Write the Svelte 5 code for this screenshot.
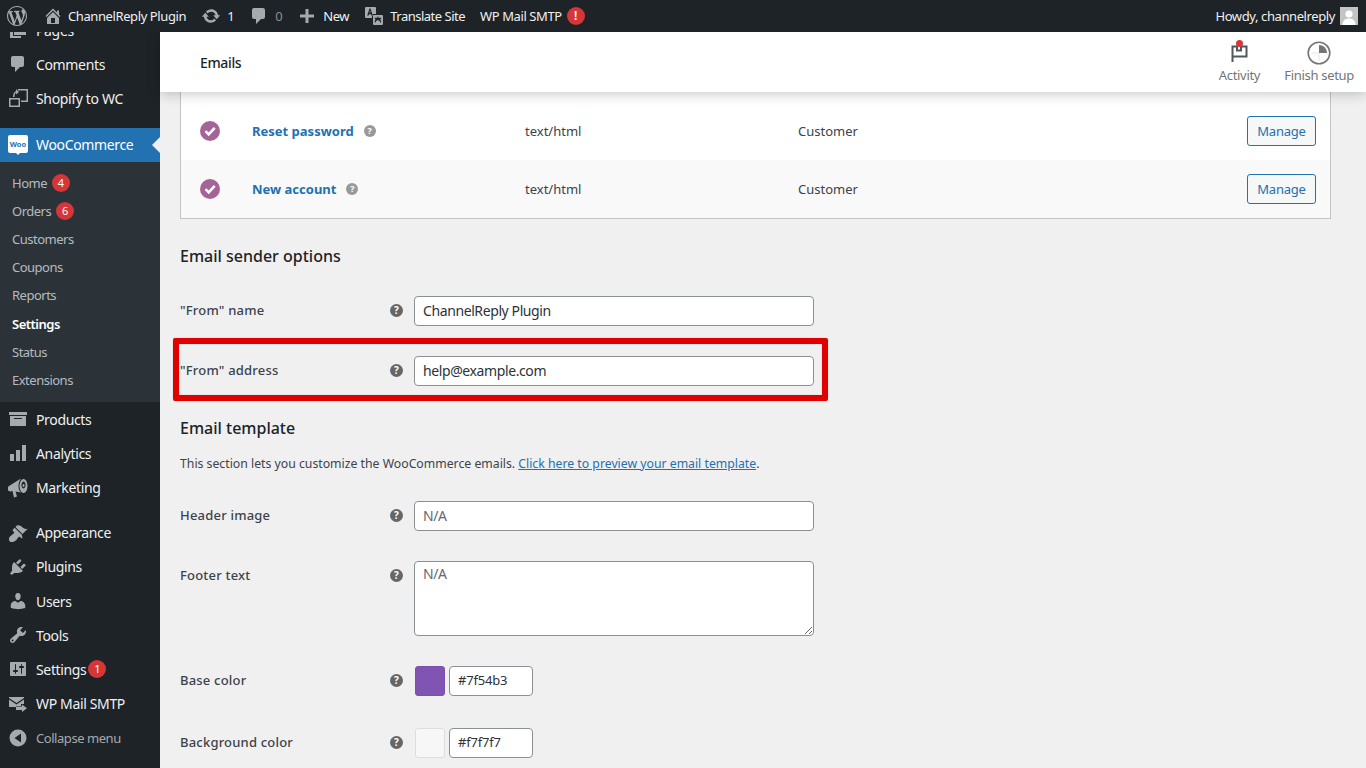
<script>
	const paths = {
		wp: 'M20 10c0-5.51-4.49-10-10-10C4.48 0 0 4.49 0 10c0 5.52 4.48 10 10 10 5.51 0 10-4.48 10-10zM7.78 15.37L4.37 6.22c.55-.02 1.17-.08 1.17-.08.5-.06.44-1.13-.06-1.11 0 0-1.45.11-2.37.11-.18 0-.37 0-.58-.01C4.12 2.69 6.87 1.11 10 1.11c2.33 0 4.45.87 6.05 2.34-.68-.11-1.65.39-1.65 1.58 0 .74.45 1.36.9 2.1.35.61.55 1.36.55 2.46 0 1.49-1.4 5-1.4 5l-3.03-8.37c.54-.02.82-.17.82-.17.5-.05.44-1.25-.06-1.22 0 0-1.44.12-2.38.12-.87 0-2.33-.12-2.33-.12-.5-.03-.56 1.2-.06 1.22l.92.08 1.26 3.41zM17.41 10c.24-.64.74-1.87.43-4.25.7 1.29 1.05 2.71 1.05 4.25 0 3.29-1.73 6.24-4.4 7.78.97-2.59 1.94-5.2 2.92-7.78zM6.1 18.09C3.12 16.65 1.11 13.53 1.11 10c0-1.3.23-2.48.72-3.59C3.25 10.3 4.67 14.2 6.1 18.09zm4.03-6.63l2.58 6.98c-.86.29-1.76.45-2.71.45-.79 0-1.57-.11-2.29-.33.81-2.38 1.62-4.74 2.42-7.1z',
		home: 'M16 8.5l1.53 1.53-1.06 1.06L10 4.62l-6.47 6.47-1.06-1.06L10 2.5l4 4v-2h2v4zm-6-2.46l6 5.99V18H4v-5.97zM12 17v-5H8v5h4z',
		comments: 'M5 2h9c1.1 0 2 .9 2 2v7c0 1.1-.9 2-2 2h-2l-5 5v-5H5c-1.1 0-2-.9-2-2V4c0-1.1.9-2 2-2z',
		update: 'M10.2 3.28c3.53 0 6.43 2.61 6.92 6h2.08l-3.5 4-3.5-4h2.32c-.45-1.97-2.21-3.44-4.32-3.44-1.45 0-2.73.71-3.54 1.78L4.95 5.66C6.23 4.2 8.11 3.28 10.2 3.28zm-.4 13.44c-3.52 0-6.43-2.61-6.92-6H.8l3.5-4c1.17 1.33 2.33 2.67 3.5 4H5.48c.45 1.97 2.21 3.44 4.32 3.44 1.45 0 2.73-.71 3.54-1.78l1.71 1.95c-1.28 1.46-3.15 2.39-5.25 2.39z',
		plus: 'M17 8.5v3h-5.5V17h-3v-5.500H3v-3h5.500V3h3v5.500z',
		translate: 'M2 1h9a1 1 0 0 1 1 1v6H9a1 1 0 0 0-1 1v3H2a1 1 0 0 1-1-1V2a1 1 0 0 1 1-1zm3.500 1.500L3.200 9.500h1.400l.4-1.300h2l.4 1.300h1.400L6.500 2.500zm.5 2l.6 2H5.400zM10 9h8a1 1 0 0 1 1 1v8a1 1 0 0 1-1 1h-8a1 1 0 0 1-1-1v-8a1 1 0 0 1 1-1zm3.400 1.500v1.200h-2.900v1h1l-1 3.600 1 .3.700-1.600 1.700-1 1.700 1 .7 1.600 1-.3-1-3.600h1v-1h-2.900v-1.200z',
		pages: 'M6 15V2h12v13H6zm-1 1h8v2H2V5h3v11z',
		shopify: 'M10 1h10v13h-7v-1.500h5.500V2.500H10zM1 10h11v9H1zm1.500 1.500v6h8v-6zM5 9c0-3 1-5 3-6V1l3 3-3 2.500V4.500c-1 1-1.500 2.500-1.500 4.500z',
		woo: 'M2 0h16a2 2 0 0 1 2 2v14a2 2 0 0 1-2 2h-6l-2 2-2-2H2a2 2 0 0 1-2-2V2a2 2 0 0 1 2-2z',
		products: 'M1 3h18v3H1zM2 7h16v10H2zm4 2v1h8V9z',
		analytics: 'M2 11h4v7H2zM8 7h4v11H8zM14 2h4v16h-4z',
		marketing: 'M1 8L13 .5c-1.500 2-2.500 4.500-2.500 7.500s1 5.500 2.500 6.500L7.500 13.500l1.500 5-3 1L4.500 13 2 13.500a3 3 0 0 1-1-5.500zM15.500 1a4 7 0 1 0 .01 0zm0 2.500a2 3.500 0 1 1-.01 0zm0 2.500a1 1.500 0 1 0 .01 0z',
		appearance: 'M14.48 11.06L7.41 3.99l1.5-1.5c.5-.56 2.3-.47 3.51.32 1.21.8 1.43 1.28 2.91 2.1 1.18.64 2.45 1.26 4.45.85zm-.71.71L6.7 4.7 4.93 6.47c-.39.39-.39 1.02 0 1.41l1.06 1.06c.39.39.39 1.03 0 1.42-.6.6-1.43 1.11-2.21 1.69-.35.26-.7.53-1.01.84C1.43 13.23.91 15.17.91 16.4c0 1.42 1.16 2.65 2.65 2.65 1.23 0 3.17-.52 4.52-1.87.31-.31.58-.66.84-1.01.58-.78 1.09-1.61 1.69-2.21.39-.39 1.03-.39 1.42 0l1.06 1.06c.39.39 1.02.39 1.41 0z',
		plugins: 'M13.11 4.36L9.87 7.6 8 5.73l3.24-3.24c.35-.34 1.05-.2 1.56.32.52.51.66 1.21.31 1.55zm-8 1.77l.91-1.12 9.01 9.01-1.19.84c-.71.71-2.63 1.16-3.82 1.16H6.14L4.9 17.26c-.59.59-1.54.59-2.12 0-.59-.58-.59-1.53 0-2.12l1.24-1.24v-3.88c0-1.13.4-3.19 1.09-3.89zm7.26 3.97l3.24-3.24c.34-.35 1.04-.21 1.55.31.52.51.66 1.21.31 1.55l-3.24 3.25z',
		users: 'M10 9.25c-2.27 0-2.73-3.44-2.73-3.44C7 4.02 7.82 2 9.97 2c2.16 0 2.98 2.02 2.71 3.81 0 0-.41 3.44-2.68 3.44zm0 2.57L12.72 10c2.39 0 4.52 2.33 4.52 4.53v2.49s-3.65 1.13-7.24 1.13c-3.65 0-7.24-1.13-7.24-1.13v-2.49c0-2.25 1.94-4.48 4.47-4.48z',
		tools: 'M16.68 9.77c-1.34 1.34-3.3 1.67-4.95.99l-5.41 6.52c-.99.99-2.59.99-3.58 0s-.99-2.59 0-3.57l6.52-5.42c-.68-1.65-.35-3.61.99-4.95 1.28-1.28 3.12-1.62 4.72-1.06l-2.89 2.89 2.82 2.82 2.86-2.87c.53 1.58.18 3.39-1.08 4.65zM3.81 16.21c.4.39 1.04.39 1.43 0 .4-.4.4-1.04 0-1.43-.39-.4-1.03-.4-1.43 0-.39.39-.39 1.03 0 1.43z',
		settings: 'M18 16V4c0-.55-.45-1-1-1H3c-.55 0-1 .45-1 1v12c0 .55.45 1 1 1h14c.55 0 1-.45 1-1zM8 11h1c.55 0 1 .45 1 1s-.45 1-1 1H8v1.500c0 .28-.22.5-.5.5s-.5-.22-.5-.5V13H6c-.55 0-1-.45-1-1s.45-1 1-1h1V5.500c0-.28.22-.5.5-.5s.5.22.5.5V11zm5-2h-1c-.55 0-1-.45-1-1s.45-1 1-1h1V5.500c0-.28.22-.5.5-.5s.5.22.5.5V7h1c.55 0 1 .45 1 1s-.45 1-1 1h-1v5.500c0 .28-.22.5-.5.5s-.5-.22-.5-.5V9z',
		smtp: 'M1 3h15v1L8.500 9 1 4zm0 2.500l7.500 5 7.500-5V10h-3v3H1zM14 10.500l5 3.800-5 3.700V16H8v-3.500h6z',
		collapse: 'M10 1.500a8.500 8.500 0 1 1 0 17 8.500 8.500 0 0 1 0-17zM13 5.500L6.500 10l6.500 4.500z'
	};

	const topMenu = [
		{ label: 'Pages', icon: 'pages' },
		{ label: 'Comments', icon: 'comments' },
		{ label: 'Shopify to WC', icon: 'shopify' }
	];
	const subMenu = [
		{ label: 'Home', count: 4 },
		{ label: 'Orders', count: 6 },
		{ label: 'Customers' },
		{ label: 'Coupons' },
		{ label: 'Reports' },
		{ label: 'Settings', current: true },
		{ label: 'Status' },
		{ label: 'Extensions' }
	];
	const wooMenu = [
		{ label: 'Products', icon: 'products' },
		{ label: 'Analytics', icon: 'analytics' },
		{ label: 'Marketing', icon: 'marketing' }
	];
	const siteMenu = [
		{ label: 'Appearance', icon: 'appearance' },
		{ label: 'Plugins', icon: 'plugins' },
		{ label: 'Users', icon: 'users' },
		{ label: 'Tools', icon: 'tools' },
		{ label: 'Settings', icon: 'settings', count: 1 },
		{ label: 'WP Mail SMTP', icon: 'smtp' }
	];
	const emails = [
		{ name: 'Reset password' },
		{ name: 'New account', alt: true }
	];
</script>

{#snippet icon(name, size, cls = '')}
	<svg class={cls} width={size} height={size} viewBox="0 0 20 20" fill="currentColor" fill-rule="evenodd"><path d={paths[name]} /></svg>
{/snippet}

{#snippet help(cls = '')}
	<span class="help {cls}">?</span>
{/snippet}

{#snippet menuRow(item)}
	<li class="menu-item">
		<span class="menu-icon">{@render icon(item.icon, 20)}</span>
		<span>{item.label}</span>
		{#if item.count}<span class="count">{item.count}</span>{/if}
	</li>
{/snippet}

<div class="page">
	<header class="adminbar">
		<div class="bar-left">
			<span class="bar-item wp">{@render icon('wp', 20)}</span>
			<span class="bar-item site">{@render icon('home', 20)}<span class="txt">ChannelReply Plugin</span></span>
			<span class="bar-item updates">{@render icon('update', 20)}<span class="txt">1</span></span>
			<span class="bar-item comments">{@render icon('comments', 20)}<span class="txt dim">0</span></span>
			<span class="bar-item new">{@render icon('plus', 20)}<span class="txt">New</span></span>
			<span class="bar-item translate">{@render icon('translate', 20)}<span class="txt">Translate Site</span></span>
			<span class="bar-item smtp"><span class="txt">WP Mail SMTP</span><span class="alert">!</span></span>
		</div>
		<div class="bar-right">
			<span class="txt">Howdy, channelreply</span>
			<span class="avatar">
				<svg width="18" height="18" viewBox="0 0 18 18"><rect width="18" height="18" fill="#c4c4c4" /><circle cx="9" cy="7" r="3.600" fill="#fff" /><path d="M2.500 18c0-4.500 3-6.500 6.500-6.500s6.500 2 6.500 6.500z" fill="#fff" /></svg>
			</span>
		</div>
	</header>

	<div class="body">
		<nav class="sidebar">
			<ul class="menu first">
				{#each topMenu as item}
					{@render menuRow(item)}
				{/each}
			</ul>

			<div class="woo-head">
				<span class="menu-icon woo-icon">
					<svg width="20" height="20" viewBox="0 0 20 20"><path d={paths.woo} fill="#fff" /><text x="10" y="11.500" text-anchor="middle" class="woo-word">Woo</text></svg>
				</span>
				<span>WooCommerce</span>
			</div>
			<ul class="submenu">
				{#each subMenu as item}
					<li class:current={item.current}>
						<span>{item.label}</span>
						{#if item.count}<span class="count">{item.count}</span>{/if}
					</li>
				{/each}
			</ul>

			<ul class="menu woo-group">
				{#each wooMenu as item}
					{@render menuRow(item)}
				{/each}
			</ul>
			<ul class="menu site-group">
				{#each siteMenu as item}
					{@render menuRow(item)}
				{/each}
				<li class="menu-item collapse">
					<span class="menu-icon">{@render icon('collapse', 20)}</span>
					<span>Collapse menu</span>
				</li>
			</ul>
		</nav>

		<main class="main">
			<div class="wc-header">
				<h1>Emails</h1>
				<div class="wc-actions">
					<div class="wc-action">
						<span class="activity-icon">
							<svg width="24" height="24" viewBox="0 0 24 24" fill="none" stroke="#50575e" stroke-width="2"><path d="M5.500 21V5.500h4.500v4h4v-4h5.500v10H5.500" /></svg>
							<span class="dot"></span>
						</span>
						<span>Activity</span>
					</div>
					<div class="wc-action">
						<svg width="24" height="24" viewBox="0 0 24 24"><circle cx="12" cy="12" r="10.800" fill="#fff" stroke="#757575" stroke-width="1.600" /><path d="M12 4a8 8 0 0 1 8 8h-8z" fill="#757575" /><path d="M12 12v8M4 12h8" stroke="#e4e4e4" stroke-width="1" /></svg>
						<span>Finish setup</span>
					</div>
				</div>
			</div>

			<div class="content">
				<div class="email-table">
					{#each emails as row}
						<div class="email-row" class:alt={row.alt}>
							<span class="check">
								<svg width="20" height="20" viewBox="0 0 20 20"><circle cx="10" cy="10" r="10" fill="#a46497" /><path d="M5.500 10.200l3.200 3.200 6-6.600" fill="none" stroke="#fff" stroke-width="2.600" /></svg>
							</span>
							<span class="email-name"><a href="#top">{row.name}</a>{@render help('light')}</span>
							<span class="email-type">text/html</span>
							<span class="email-to">Customer</span>
							<span class="email-action"><button>Manage</button></span>
						</div>
					{/each}
				</div>

				<h2 class="sender-title">Email sender options</h2>
				<div class="field from-name">
					<label for="from-name">"From" name</label>
					{@render help()}
					<input id="from-name" value="ChannelReply Plugin" />
				</div>
				<div class="field from-address">
					<label for="from-address">"From" address</label>
					{@render help()}
					<input id="from-address" value="help@example.com" />
					<span class="highlight"></span>
				</div>

				<h2 class="template-title">Email template</h2>
				<p class="intro">This section lets you customize the WooCommerce emails. <a href="#top">Click here to preview your email template</a>.</p>

				<div class="field header-image">
					<label for="header-image">Header image</label>
					{@render help()}
					<input id="header-image" placeholder="N/A" />
				</div>
				<div class="field footer-text">
					<label for="footer-text">Footer text</label>
					{@render help()}
					<textarea id="footer-text" placeholder="N/A"></textarea>
				</div>
				<div class="field base-color">
					<label for="base-color">Base color</label>
					{@render help()}
					<span class="swatch purple"></span>
					<input id="base-color" class="color" value="#7f54b3" />
				</div>
				<div class="field bg-color">
					<label for="bg-color">Background color</label>
					{@render help()}
					<span class="swatch pale"></span>
					<input id="bg-color" class="color" value="#f7f7f7" />
				</div>
			</div>
		</main>
	</div>
</div>

<style>
	:global(body) {
		margin: 0;
		background: #f0f0f1;
	}

	.page {
		height: 768px;
		display: flex;
		flex-direction: column;
		overflow: hidden;
		background: #f0f0f1;
		font-family: "Noto Sans", "Open Sans", sans-serif;
		font-size: 13px;
		color: #3c434a;
	}

	.adminbar {
		height: 32px;
		flex: none;
		display: flex;
		justify-content: space-between;
		align-items: center;
		background: #1d2327;
		color: #f0f0f1;
		position: relative;
		z-index: 3;
	}

	.bar-left,
	.bar-item,
	.bar-right {
		display: flex;
		align-items: center;
	}

	.bar-item svg {
		color: #a7aaad;
		flex: none;
	}

	.bar-item {
		margin-left: 15px;
		gap: 6px;
	}

	.wp { margin-left: 7px; }
	.site { margin-left: 16px; gap: 5px; }
	.smtp { gap: 5px; }

	.txt {
		white-space: nowrap;
		letter-spacing: -0.4px;
	}

	.translate .txt {
		letter-spacing: -0.5px;
	}

	.dim {
		color: #8c8f94;
	}

	.alert {
		width: 18px;
		height: 18px;
		border-radius: 50%;
		background: #d63638;
		color: #fff;
		font-size: 12px;
		font-weight: 600;
		line-height: 18px;
		text-align: center;
	}

	.bar-right {
		gap: 5px;
		padding-right: 8px;
	}

	.avatar {
		display: block;
		width: 18px;
		height: 18px;
	}

	.avatar svg {
		display: block;
	}

	.body {
		flex: 1;
		display: flex;
		min-height: 0;
	}

	.sidebar {
		width: 160px;
		flex: none;
		background: #1d2327;
		color: #f0f0f1;
		overflow: hidden;
		font-size: 14px;
		letter-spacing: -0.35px;
	}

	ul {
		list-style: none;
		margin: 0;
		padding: 0;
	}

	.menu.first {
		margin-top: -19px;
		margin-bottom: 12px;
	}

	.menu-item {
		height: 34.2px;
		display: flex;
		align-items: center;
		white-space: nowrap;
	}

	.menu-icon {
		width: 36px;
		flex: none;
		display: flex;
		justify-content: center;
		color: #a7aaad;
	}

	.menu-item .count {
		margin-left: 2px;
	}

	.count {
		display: inline-block;
		width: 18px;
		height: 18px;
		border-radius: 50%;
		background: #d63638;
		color: #fff;
		font-size: 11px;
		line-height: 18px;
		text-align: center;
		letter-spacing: 0;
	}

	.woo-head {
		height: 34px;
		display: flex;
		align-items: center;
		background: #2271b1;
		color: #fff;
		position: relative;
	}

	.woo-head::after {
		content: "";
		position: absolute;
		right: 0;
		top: 9px;
		border: 8px solid transparent;
		border-right-color: #f0f0f1;
		border-left-width: 0;
	}

	.woo-word {
		font-size: 7.500px;
		font-weight: 700;
		fill: #2271b1;
		letter-spacing: 0;
	}

	.submenu {
		background: #2c3338;
		padding: 7px 0 8px;
		font-size: 13px;
		color: rgba(240, 246, 252, 0.7);
		letter-spacing: -0.5px;
	}

	.submenu li {
		height: 28.2px;
		padding-left: 12px;
		display: flex;
		align-items: center;
		gap: 5px;
	}

	.submenu .current {
		color: #fff;
		font-weight: 600;
	}

	.site-group {
		margin-top: 11px;
	}

	.collapse {
		color: #a7aaad;
		font-size: 13px;
		letter-spacing: -0.45px;
	}

	.main {
		flex: 1;
		min-width: 0;
		display: flex;
		flex-direction: column;
		position: relative;
	}

	.wc-header {
		height: 60px;
		flex: none;
		background: #fff;
		box-shadow: 0 2px 12px rgba(0, 0, 0, 0.22);
		display: flex;
		justify-content: space-between;
		align-items: center;
		position: relative;
		z-index: 2;
	}

	h1 {
		margin: 0 0 0 40px;
		font-size: 14px;
		font-weight: 500;
		color: #1e1e1e;
		letter-spacing: -0.35px;
	}

	.wc-actions {
		display: flex;
		height: 100%;
		align-items: center;
		gap: 24px;
		padding-right: 12px;
		color: #757575;
		letter-spacing: -0.3px;
	}

	.wc-action {
		display: flex;
		flex-direction: column;
		align-items: center;
		gap: 1px;
	}

	.activity-icon {
		position: relative;
		display: block;
		height: 24px;
	}

	.dot {
		position: absolute;
		top: -1px;
		left: 9px;
		width: 7px;
		height: 7px;
		border-radius: 50%;
		background: #d63638;
	}

	.content {
		flex: 1;
		min-height: 0;
		overflow: hidden;
		padding: 0 35px 0 20px;
	}

	.email-table {
		background: #fff;
		border: 1px solid #c3c4c7;
		border-top: 0;
		padding-top: 10px;
	}

	.email-row {
		height: 58px;
		display: grid;
		grid-template-columns: 52px 273px 273px 1fr auto;
		align-items: center;
		padding: 0 14px 0 19px;
		background: #fff;
	}

	.email-row.alt {
		background: #f9f9f9;
	}

	.check {
		display: flex;
	}

	.email-name {
		display: flex;
		align-items: center;
		gap: 10px;
	}

	.email-name a {
		color: #2271b1;
		font-weight: 700;
		text-decoration: none;
	}

	button {
		height: 30px;
		width: 69px;
		border: 1px solid #2271b1;
		border-radius: 3px;
		background: #f6f7f7;
		color: #2271b1;
		font: inherit;
		letter-spacing: -0.2px;
		padding: 0;
	}

	.help {
		width: 12px;
		height: 12px;
		flex: none;
		border-radius: 50%;
		background: #666;
		color: #fff;
		font-size: 9px;
		font-weight: 700;
		line-height: 12px;
		text-align: center;
	}

	.help.light {
		background: #999;
	}

	h2 {
		margin: 0;
		font-size: 16px;
		font-weight: 500;
		color: #1d2327;
		line-height: 24px;
	}

	.sender-title {
		margin-top: 25px;
	}

	.field {
		display: flex;
		align-items: center;
		position: relative;
	}

	.field label {
		width: 210px;
		flex: none;
		padding-bottom: 2px;
		font-weight: 500;
		color: #3c434a;
		letter-spacing: 0.2px;
	}

	.field .help {
		width: 13px;
		height: 13px;
		line-height: 13px;
		font-size: 10px;
		margin-right: 11px;
		margin-bottom: 2px;
	}

	input,
	textarea {
		box-sizing: border-box;
		width: 400px;
		height: 30px;
		margin: 0;
		padding: 0 8px 2px;
		border: 1px solid #8c8f94;
		border-radius: 4px;
		background: #fff;
		color: #2c3338;
		font: inherit;
		font-size: 14px;
		letter-spacing: -0.4px;
		outline: 0;
	}

	input::placeholder,
	textarea::placeholder {
		color: #646970;
		opacity: 1;
	}

	.from-name {
		margin-top: 28px;
	}

	.from-address {
		margin-top: 30px;
	}

	.highlight {
		position: absolute;
		left: -7px;
		top: -18px;
		width: 655px;
		height: 63px;
		box-sizing: border-box;
		border: 6px solid #e00000;
		border-radius: 2px;
		box-shadow: 0 0 1px rgba(0, 0, 0, 0.4), inset 0 0 1px rgba(0, 0, 0, 0.4);
		pointer-events: none;
	}

	.template-title {
		margin-top: 30px;
	}

	.intro {
		margin: 15px 0 0;
		font-size: 12.250px;
		line-height: 18px;
	}

	.intro a {
		color: #2271b1;
	}

	.header-image {
		margin-top: 28px;
	}

	.footer-text {
		margin-top: 30px;
		align-items: flex-start;
	}

	.footer-text label {
		margin-top: 5px;
	}

	.footer-text .help {
		margin-top: 8px;
	}

	textarea {
		height: 75px;
		padding-top: 2px;
		resize: vertical;
	}

	.base-color {
		margin-top: 30px;
	}

	.bg-color {
		margin-top: 32px;
	}

	.swatch {
		box-sizing: border-box;
		width: 30px;
		height: 30px;
		margin: 0 4px 0 1px;
		border-radius: 3px;
		border: 1px solid #ddd;
	}

	.swatch.purple {
		background: #7f54b3;
		border-color: #7a50ab;
	}

	.swatch.pale {
		background: #f7f7f7;
	}

	input.color {
		width: 84px;
		font-size: 13px;
		letter-spacing: -0.2px;
	}
</style>
